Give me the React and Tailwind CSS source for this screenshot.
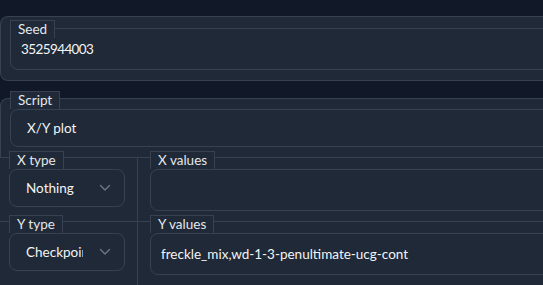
// App.jsx
// Seed / Script / X-Y plot settings panel in a dark form theme.

import React from 'react';

const Label = ({ children, className = '' }) => (
  <span
    className={`relative z-10 flex h-[18px] w-fit items-center border border-b-0 border-[#374151] bg-[#1f2937] px-[7px] text-[13.5px] leading-none text-gray-200 ${className}`}
  >
    {children}
  </span>
);

const Chevron = () => (
  <svg width="12" height="8" viewBox="0 0 12 8" fill="none" className="shrink-0">
    <path d="M1.5 1.5L6 6l4.5-4.5" stroke="#6b7280" strokeWidth="1.5" strokeLinecap="round" strokeLinejoin="round" />
  </svg>
);

const Dropdown = ({ value, className = '' }) => (
  <div className={`flex h-[38px] items-center rounded-lg border border-[#374151] pl-4 text-[13.5px] text-gray-100 ${className}`}>
    <span className="w-[57px] shrink-0 overflow-hidden whitespace-nowrap">{value}</span>
    <span className="ml-auto mr-[13px]">
      <Chevron />
    </span>
  </div>
);

const TextBox = ({ value, className = '' }) => (
  <div className={`flex h-[42px] items-center rounded-lg border border-[#374151] pl-[10px] text-[13.5px] text-gray-100 ${className}`}>
    {value}
  </div>
);

export default function App() {
  return (
    <div className="h-[285px] w-[543px] overflow-hidden bg-[#111827] font-[Lato,sans-serif]">
      <div className="w-[620px] pt-4">
        {/* Seed */}
        <div className="h-[65px] rounded-l-lg border border-r-0 border-[#374151] bg-[#1f2937] pl-[9px] pt-[3px]">
          <Label>Seed</Label>
          <div className="-mt-[10px]">
            <TextBox value="3525944003" className="tracking-[-0.6px]" />
          </div>
        </div>

        {/* Script */}
        <div className="mt-[17px] h-[59px] rounded-tl-lg border-l border-t border-[#374151] bg-[#1f2937] pl-[9px]">
          <Label className="-mt-[8px]">Script</Label>
          <div className="flex h-[38px] items-center rounded-lg border border-[#374151] pl-4 text-[13.5px] text-gray-100">X/Y plot</div>
        </div>

        {/* X row */}
        <div className="flex h-[64px] border-t border-[#374151] bg-[#1f2937]">
          <div className="w-[137px] shrink-0 pl-[9px]">
            <Label className="-mt-[7px]">X type</Label>
            <Dropdown value="Nothing" className="w-[116px]" />
          </div>
          <div className="flex-1 border-l border-[#374151] pl-[12px]">
            <Label className="-mt-[7px]">X values</Label>
            <TextBox value="" />
          </div>
        </div>

        {/* Y row */}
        <div className="flex h-[80px] border-t border-[#374151] bg-[#1f2937]">
          <div className="w-[137px] shrink-0 pl-[9px]">
            <Label className="-mt-[7px]">Y type</Label>
            <Dropdown value="Checkpoint" className="w-[116px]" />
          </div>
          <div className="flex-1 border-l border-[#374151] pl-[12px]">
            <Label className="-mt-[7px]">Y values</Label>
            <TextBox value="freckle_mix,wd-1-3-penultimate-ucg-cont" />
          </div>
        </div>
      </div>
    </div>
  );
}
